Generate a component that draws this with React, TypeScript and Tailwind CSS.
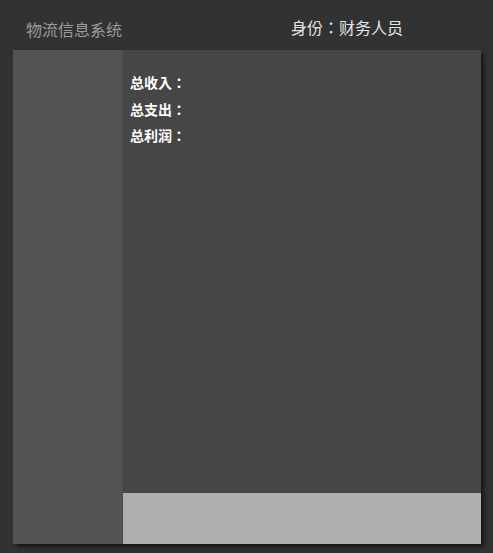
import React from 'react';

const App = () => {
  const rows = ['总收入：', '总支出：', '总利润：'];

  return (
    <div
      className="w-[493px] h-[553px] bg-[#323232] flex flex-col overflow-hidden"
      style={{ fontFamily: '"Noto Sans CJK TC", "Noto Sans CJK SC", sans-serif' }}
    >
      {/* Header */}
      <div className="h-[50px] flex items-center shrink-0">
        <div className="w-[291px] pl-[26px] pt-[8px] text-[16px] text-[#9a9a9a]">物流信息系统</div>
        <div className="pt-[4px] text-[16px] text-[#e6e6e6]">身份：财务人员</div>
      </div>

      {/* Panel */}
      <div className="ml-[13px] w-[468px] h-[494px] flex shadow-[3px_3px_4px_rgba(0,0,0,0.55)]">
        <div className="w-[110px] bg-[#535353] border-r border-[#4a4a4a]" />
        <div className="flex-1 flex flex-col bg-[#464646]">
          <div className="flex-1 pl-[7px] pt-[19px]">
            {rows.map((r) => (
              <div key={r} className="h-[26.5px] text-[14px] font-bold text-white leading-[26px]">
                {r}
              </div>
            ))}
          </div>
          <div className="h-[51px] bg-[#afafaf]" />
        </div>
      </div>
    </div>
  );
};

export default App;
